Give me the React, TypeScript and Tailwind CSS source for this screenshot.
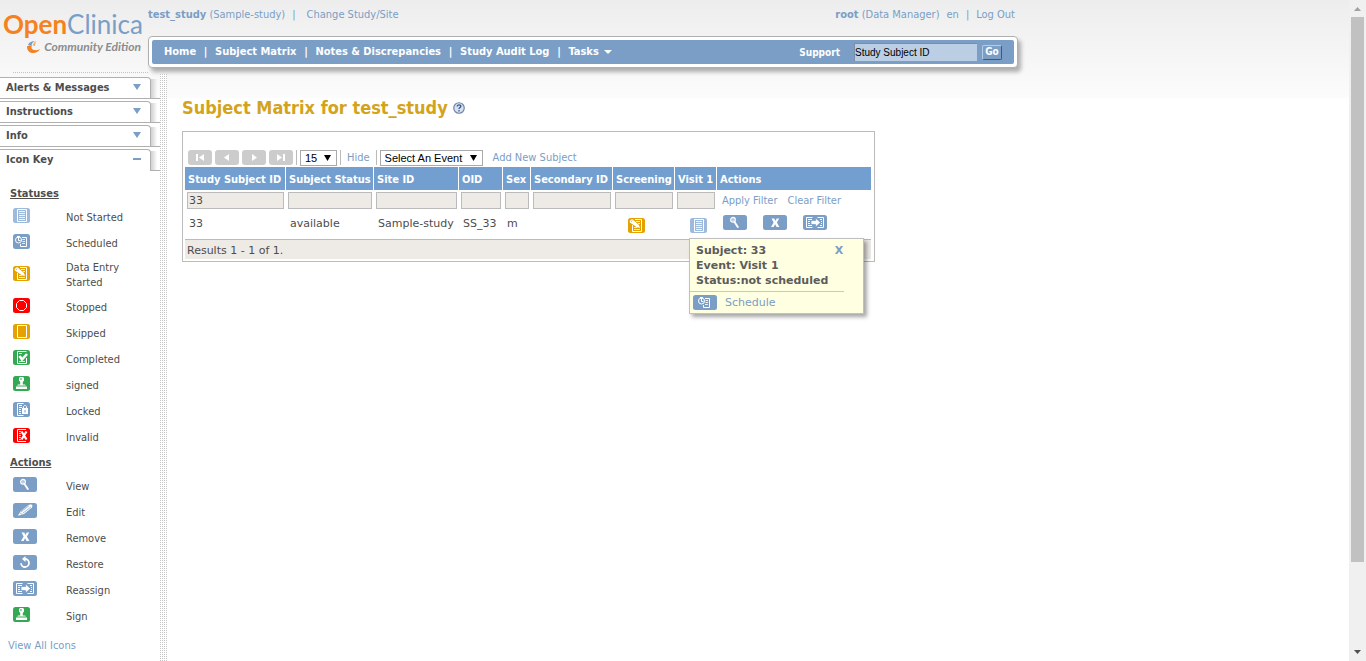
import React from "react";

const BLUE = "#7a9ec6";

type IconName =
  | "notStarted" | "scheduled" | "started" | "stopped" | "skipped" | "completed" | "signed"
  | "locked" | "invalid" | "view" | "edit" | "remove" | "restore" | "reassign" | "schedule";

const wide: IconName[] = ["view", "edit", "remove", "restore", "reassign", "schedule"];

const fills: Record<IconName, string> = {
  notStarted: "#9db9dc", scheduled: BLUE, started: "#e5a100", stopped: "#ff0000", skipped: "#e5a100",
  completed: "#34a853", signed: "#34a853", locked: BLUE, invalid: "#ff0000", view: BLUE, edit: BLUE,
  remove: BLUE, restore: BLUE, reassign: BLUE, schedule: BLUE,
};

const clock = (
  <g stroke="#fff" fill="none">
    <path d="M9 3.500h4.500v9h-6v-2.500" />
    <path d="M9.500 5.500h2.500M9.500 7.500h2.500M9 9.500h3" opacity=".85" />
    <circle cx="5.500" cy="6" r="3" fill={BLUE} />
    <path d="M5.500 6.500V2.500M5.500 6.500h2M4 2.500h3" />
  </g>
);

const glyphs: Record<IconName, React.ReactNode> = {
  notStarted: (
    <g stroke="#fff" fill="none">
      <path d="M4.500 1.500h9v12h-9z" />
      <path d="M6 3.500h6M6 5.500h6M6 7.500h6M6 9.500h6M6 11.500h6" opacity=".85" />
    </g>
  ),
  scheduled: clock,
  started: (
    <g stroke="#fff" fill="none">
      <path d="M4.500 7v6.500h9v-12H7" />
      <path d="M8 3.500h4M10 5.500h2M6 9.500h3M6 11.500h6" opacity=".85" />
      <path d="M1.500 3.500l1.500-2 1.500-.2 6.500 5.700 1 3-3.200-.7-6.800-4.800z" fill="#fff" stroke="none" />
      <path d="M4.200 2.500l-1 1.500" stroke="#e5a100" strokeWidth=".7" />
    </g>
  ),
  stopped: <path d="M6.500 2.500h4l3 3v4l-3 3h-4l-3-3v-4z" stroke="#fff" fill="none" />,
  skipped: <path d="M4.500 1.500h9v12h-9z" stroke="#fff" fill="none" />,
  completed: (
    <g stroke="#fff" fill="none">
      <path d="M13.500 8v5.500h-9v-12h9" />
      <path d="M6 3.500h3M6 11.500h6" opacity=".8" />
      <path d="M6.500 6l2.500 3.500 5-5.500" strokeWidth="2.600" />
    </g>
  ),
  signed: (
    <g fill="#fff">
      <path d="M6 2l1-1h3l1 1v2.500L9.800 6v2.500H12l1 1H4l1-1h2.200V6L6 4.500z" />
      <path d="M3 10.500h11v2.500H3z" />
      <path d="M7.500 2h1v2h-1z" fill="#34a853" />
    </g>
  ),
  locked: (
    <g stroke="#fff" fill="none">
      <path d="M10.500 13.500h-6v-12h6" />
      <path d="M6 3.500h3M6 5.500h3M6 7.500h2M6 9.500h2M6 11.500h2" />
      <path d="M9 6h6v6H9z" fill="#fff" stroke="none" />
      <path d="M10.500 6.500v-2l1-1h1l1 1v2" />
      <path d="M11.500 8h1v2.500h-1z" fill={BLUE} stroke="none" />
    </g>
  ),
  invalid: (
    <g stroke="#fff" fill="none">
      <path d="M13 1.500H4.500v12H13" />
      <path d="M6 3.500h2M6 5.500h2M6 7.500h2M6 9.500h2M6 11.500h2" opacity=".8" />
      <path d="M8.500 3.500l5 8M13.500 3.500l-5 8" strokeWidth="2.200" />
    </g>
  ),
  view: (
    <g stroke="#fff" fill="none">
      <circle cx="10" cy="4.800" r="2.300" strokeWidth="1.300" />
      <path d="M9 4.200h2M9 5.600h2" strokeWidth=".6" />
      <path d="M11.500 7l3.300 5" strokeWidth="1.900" strokeLinecap="round" />
    </g>
  ),
  edit: (
    <g>
      <path d="M4.800 12.800l2.700-4.300L15.500 2l2.500-.8 1.500 1.300-.5 2L11 11z" fill="#fff" />
      <path d="M8 9L16 2.700M9.800 10.200L18 4M7 10l2.200 1.300" stroke={BLUE} strokeWidth=".7" fill="none" />
    </g>
  ),
  remove: <path d="M8.500 3.500h2.800l1.200 2.400 1.200-2.400h2.500l-2.300 4 2.500 4.500h-2.800l-1.500-2.800-1.500 2.800H8l2.600-4.500z" fill="#fff" />,
  restore: (
    <g fill="none" stroke="#fff">
      <path d="M12 4a4 4 0 1 1-4 4.300" strokeWidth="1.800" />
      <path d="M12.500 1v6L9 4z" fill="#fff" stroke="none" />
    </g>
  ),
  reassign: (
    <g stroke="#fff" fill="none">
      <path d="M9.500 2.500h-6v10h6M14.500 2.500h6v10h-6" />
      <path d="M5 4.500h4M5 6.500h2M5 8.500h2M5 10.500h4M17 4.500h2M18 6.500h1M18 8.500h1M17 10.500h2" />
      <path d="M8 5.500h4.500V3l5 4.500-5 4.500V9.500H8z" fill="#fff" stroke={BLUE} strokeWidth=".8" />
    </g>
  ),
  schedule: <g transform="translate(3 0)">{clock}</g>,
};

function Icon({ name, label }: { name: IconName; label?: string }) {
  const w = wide.includes(name) ? 24 : 17;
  return (
    <svg width={w} height={15} viewBox={`0 0 ${w} 15`} className="block shrink-0" role={label ? "img" : undefined} aria-label={label} aria-hidden={!label}>
      <rect width={w} height={15} rx="2.500" fill={fills[name]} />
      {glyphs[name]}
    </svg>
  );
}

const statuses: [IconName, string][] = [
  ["notStarted", "Not Started"], ["scheduled", "Scheduled"], ["started", "Data Entry Started"],
  ["stopped", "Stopped"], ["skipped", "Skipped"], ["completed", "Completed"],
  ["signed", "signed"], ["locked", "Locked"], ["invalid", "Invalid"],
];
const actions: [IconName, string][] = [
  ["view", "View"], ["edit", "Edit"], ["remove", "Remove"],
  ["restore", "Restore"], ["reassign", "Reassign"], ["signed", "Sign"],
];

function KeyList({ title, items }: { title: string; items: [IconName, string][] }) {
  return (
    <section>
      <h3 className="pl-[10px] pt-[2px] text-[11px] font-bold leading-[21px] underline">{title}</h3>
      <ul>
        {items.map(([icon, text]) => (
          <li key={text} className="flex min-h-[26px] items-center py-1 pl-[13px]">
            <span className="mb-[3px] w-[53px]"><Icon name={icon} /></span>
            <span className="w-[70px] leading-[15px]">{text}</span>
          </li>
        ))}
      </ul>
    </section>
  );
}

function SideTab({ title, open }: { title: string; open?: boolean }) {
  return (
    <div className="mb-[2px] flex h-[22px]">
      <button
        className={
          "flex w-[151px] items-center justify-between rounded-tr border-r border-t border-[#b0b0b0] bg-white pl-[6px] pr-[9px] text-left font-bold " +
          (open ? "pb-px" : "border-b")
        }
      >
        {title}
        {open ? (
          <svg width="8" height="6" className="mb-[2px]" aria-hidden="true"><path d="M0 2h8v2H0z" fill={BLUE} /></svg>
        ) : (
          <svg width="8" height="6" className="mb-[2px]" aria-hidden="true"><path d="M0 0h8L4 6z" fill={BLUE} /></svg>
        )}
      </button>
      <span className="mt-[2px] w-[9px] border-b border-[#b0b0b0] bg-linear-to-r from-[#d0d0d0] to-transparent to-70%" />
    </div>
  );
}

const pagers = [
  ["First page", "M8 4h2v7H8zM16 4v7l-5-3.500z"],
  ["Previous page", "M14 4v7L9 7.500z"],
  ["Next page", "M10 4v7l5-3.500z"],
  ["Last page", "M8 4v7l5-3.500zM14 4h2v7h-2z"],
];

const columns: [string, string][] = [
  ["Study Subject ID", "w-[101px]"], ["Subject Status", "w-[88px]"], ["Site ID", "w-[85px]"],
  ["OID", "w-[44px]"], ["Sex", "w-[28px]"], ["Secondary ID", "w-[82px]"],
  ["Screening", "w-[62px]"], ["Visit 1", "w-[42px]"],
];

const navItems = ["Home", "Subject Matrix", "Notes & Discrepancies", "Study Audit Log"];

function Header() {
  return (
    <header className="flex h-[74px]">
      <div className="flex w-[148px] shrink-0 flex-col">
        <a href="#" className="block h-[72px] pl-[3px] pt-[9px]" aria-label="OpenClinica Community Edition">
          <span className="block whitespace-nowrap font-['Lato',sans-serif] text-[26px] leading-[30px] text-[#7a9ec6]">
            <b className="font-bold text-[#f58220]">Open</b>Clinica
          </span>
          <span className="flex items-center justify-end gap-[3px] pr-[7px]">
            <svg width="15" height="14" viewBox="0 0 15 14" aria-hidden="true">
              <path d="M1 6.500C1 14.500 11 15 14 9c-3 2-7.500 1.500-8.500-1-.4-1 .5-2 1-2.500C3.500 5.500 1 5.500 1 6.500z" fill="#f58220" />
              <path d="M2 5c1-3 4-4 7-4-2 1-3 2-3.500 4.500C4 6 3 5 2 5z" fill={BLUE} />
              <path d="M7 5.500c0-2 1.500-4 3.500-4.500-1 1-1.500 3-1.500 5z" fill="#f5a96b" />
            </svg>
            <span className="whitespace-nowrap font-['Lato',sans-serif] text-[12px] font-bold italic leading-[16px] text-[#8c8c8c]">Community Edition</span>
          </span>
        </a>
        <div className="ml-[13px] h-px bg-[repeating-linear-gradient(90deg,#c4c4c4_0_1px,transparent_1px_2px)]" />
      </div>
      <div className="w-[870px] text-[#7a9ec6]">
        <div className="flex h-[36px] justify-between pr-[3px] pt-[7px] leading-[15px]">
          <div className="flex gap-[7px]">
            <span><a href="#" className="font-bold">test_study</a> (Sample-study)</span>
            <span>|</span>
            <a href="#" className="pl-[4px]">Change Study/Site</a>
          </div>
          <div className="flex gap-[7px]">
            <span><b>root</b> (Data Manager)</span>
            <span>en</span>
            <span>|</span>
            <a href="#">Log Out</a>
          </div>
        </div>
        <div className="rounded-[4px] border border-[#b0b0b0] bg-white p-[3px] shadow-[3px_4px_4px_rgba(0,0,0,0.3)]">
          <nav className="flex h-[24px] items-center rounded-[2px] bg-[#7a9ec6] pl-[12px] pr-[12px] font-bold text-white">
            {navItems.map((item) => (
              <React.Fragment key={item}>
                <a href="#">{item}</a>
                <span className="w-[19px] text-center">|</span>
              </React.Fragment>
            ))}
            <a href="#" className="flex items-center gap-[5px]">
              Tasks
              <svg width="8" height="4" aria-hidden="true"><path d="M0 0h8L4 4z" fill="#fff" /></svg>
            </a>
            <a href="#" className="ml-auto text-[10px]">Support</a>
            <input
              aria-label="Study Subject ID"
              defaultValue="Study Subject ID"
              className="ml-[14px] h-[18px] w-[123px] border-l border-t border-[#7d8ea3] bg-[#bccee3] font-['Liberation_Sans',sans-serif] text-[10px] font-normal text-black"
            />
            <button className="ml-[5px] h-[15px] w-[20px] rounded-[2px] border border-b-[#3b5a80] border-l-[#b5cce6] border-r-[#3b5a80] border-t-[#b5cce6] text-[10px] font-bold leading-[12px]">Go</button>
          </nav>
        </div>
      </div>
    </header>
  );
}

function Popup() {
  return (
    <div className="absolute left-[506px] top-[106px] z-10 w-[175px] border border-[#c0c0c0] bg-[#ffffe1] font-['DejaVu_Sans',sans-serif] shadow-[3px_3px_4px_rgba(0,0,0,0.35)]">
      <div className="mr-[19px] flex justify-between border-b border-[#c6c6d4] pb-[3px] pl-[6px] pt-[4px] font-bold leading-[15px] text-[#5c5c5c]">
        <p className="whitespace-nowrap">Subject: 33<br />Event: Visit 1<br />Status:not scheduled</p>
        <button aria-label="Close" className="h-[15px] w-[10px] font-bold text-[#7a9ec6]">X</button>
      </div>
      <a href="#" className="flex items-center gap-[8px] py-[3px] pl-[3px] leading-[15px] text-[#7a9ec6]">
        <Icon name="schedule" />
        Schedule
      </a>
    </div>
  );
}

function Picker({ label, text, width }: { label: string; text: string; width: string }) {
  return (
    <span className={"mb-px grid h-[16px] items-center border border-[#aaa] bg-white text-black " + width}>
      <select aria-label={label} className="col-start-1 row-start-1 h-[14px] w-full appearance-none bg-transparent pl-[4px] font-['Liberation_Sans',sans-serif] text-[11px] leading-[14px]">
        <option>{text}</option>
      </select>
      <svg width="7" height="6" className="pointer-events-none col-start-1 row-start-1 mr-[5px] justify-self-end" aria-hidden="true">
        <path d="M0 0h7L3.500 6z" />
      </svg>
    </span>
  );
}

function Matrix() {
  const field = "block h-[17px] w-full border border-[#bbb] bg-[#eeebe7] px-[1px] font-['DejaVu_Sans',sans-serif] text-[11px]";
  const cell = "pb-[2px] pt-0 pl-[4px] text-left";
  const divider = "mb-[2px] h-[15px] w-px bg-[#bbb]";
  return (
    <div className="relative w-[693px] border border-[#bbb] pb-[2px] pl-[2px] pr-[3px]">
      <div className="flex h-[35px] items-end gap-[3px] pl-[3px] text-[#7a9ec6]">
        {pagers.map(([label, d]) => (
          <button key={label} aria-label={label} className="mb-[2px]">
            <svg width="24" height="15" className="block" aria-hidden="true">
              <rect width="24" height="15" rx="3" fill="#ccc" />
              <path d={d} fill="#fff" />
            </svg>
          </button>
        ))}
        <span className={divider} />
        <Picker label="Rows per page" text="15" width="w-[37px]" />
        <span className={divider} />
        <a href="#" className="mx-[3px] leading-[18px]">Hide</a>
        <span className={divider} />
        <Picker label="Select an event" text="Select An Event" width="w-[103px]" />
        <a href="#" className="ml-[7px] leading-[18px]">Add New Subject</a>
      </div>
      <table className="w-full table-fixed border-separate border-spacing-0 font-['DejaVu_Sans',sans-serif]">
        <thead>
          <tr className="h-[23px] bg-[#729fcf] font-['DejaVu_Sans_Condensed','DejaVu_Sans',sans-serif] text-white">
            {columns.map(([name, w]) => (
              <th key={name} className={w + " whitespace-nowrap border-r border-white p-0 pl-[3px] pt-[3px] text-left"}>{name}</th>
            ))}
            <th className="p-0 pl-[3px] pt-[3px] text-left">Actions</th>
          </tr>
        </thead>
        <tbody>
          <tr className="h-[21px]">
            {columns.map(([name], i) => (
              <td key={name} className="px-[2px] py-0">
                <input aria-label={"Filter by " + name} defaultValue={i === 0 ? "33" : ""} className={field} />
              </td>
            ))}
            <td className="p-0 pl-[5px] pt-[2px] font-['DejaVu_Sans_Condensed','DejaVu_Sans',sans-serif] text-[#7a9ec6]">
              <div className="flex gap-[10px] whitespace-nowrap"><a href="#">Apply Filter</a><a href="#">Clear Filter</a></div>
            </td>
          </tr>
          <tr className="h-[28px]">
            <td className={cell}>33</td>
            <td className={cell}>available</td>
            <td className={cell + " whitespace-nowrap"}>Sample-study</td>
            <td className={cell + " whitespace-nowrap"}>SS_33</td>
            <td className={cell}>m</td>
            <td className={cell} />
            <td className="p-0 pl-[15px]"><a href="#" className="block"><Icon name="started" label="Data Entry Started" /></a></td>
            <td className="p-0 pl-[15px]"><a href="#" className="block"><Icon name="notStarted" label="Not Started" /></a></td>
            <td className="p-0 pb-[6px] pl-[6px]">
              <div className="flex gap-[16px]">
                <a href="#"><Icon name="view" label="View" /></a>
                <a href="#"><Icon name="remove" label="Remove" /></a>
                <a href="#"><Icon name="reassign" label="Reassign" /></a>
              </div>
            </td>
          </tr>
        </tbody>
        <tfoot>
          <tr>
            <td colSpan={9} className="border-t border-[#bbb] bg-[#eeebe7] p-0 pl-[2px] pt-[3px] leading-[16px]">Results 1 - 1 of 1.</td>
          </tr>
        </tfoot>
      </table>
      <Popup />
    </div>
  );
}

export default function App() {
  return (
    <div className="flex h-screen overflow-hidden bg-white font-['DejaVu_Sans_Condensed','DejaVu_Sans',sans-serif] text-[11px] text-[#4d4d4d]">
      <div className="flex min-w-0 flex-1 flex-col overflow-hidden bg-[linear-gradient(#ededed,#fcfcfc_98px,#fff_98px)]">
        <Header />
        <div className="flex min-h-0 flex-1">
          <aside className="w-[160px] shrink-0 pt-[3px]">
            <SideTab title="Alerts & Messages" />
            <SideTab title="Instructions" />
            <SideTab title="Info" />
            <SideTab title="Icon Key" open />
            <div className="pt-[8px]">
              <KeyList title="Statuses" items={statuses} />
              <KeyList title="Actions" items={actions} />
              <a href="#" className="mt-[9px] block pl-[8px] leading-[15px] text-[#7a9ec6]">View All Icons</a>
            </div>
          </aside>
          <div className="w-[7px] shrink-0 bg-[linear-gradient(transparent_1px,#fff_1px),linear-gradient(90deg,#c4c4c4_1px,#fff_1px)] bg-[length:2px_2px]" />
          <main className="min-w-0 flex-1 pl-[15px] pt-[22px]">
            <h1 className="mb-[11px] flex items-center gap-[5px] text-[18px] font-bold leading-[24px] text-[#d4a31c]">
              Subject Matrix for test_study
              <svg width="12" height="12" viewBox="0 0 13 13" role="img" aria-label="Help">
                <circle cx="6.500" cy="6.500" r="5.700" fill="#d9e2ee" stroke="#6d84a8" strokeWidth="1.300" />
                <path d="M4.500 5c0-2.500 4-2.500 4-.3 0 1.400-2 1.300-2 3" fill="none" stroke="#2f5591" strokeWidth="1.400" />
                <circle cx="6.500" cy="9.600" r=".9" fill="#2f5591" />
              </svg>
            </h1>
            <Matrix />
          </main>
        </div>
      </div>
      <div className="flex w-[17px] shrink-0 flex-col items-center bg-[#f0f0f0]" aria-hidden="true">
        <svg width="17" height="17" className="shrink-0"><path d="M5 11h7L8.500 7z" fill="#a0a0a0" /></svg>
        <div className="flex-1 self-stretch px-[2px]"><div className="h-[87%] bg-[#c1c1c1]" /></div>
        <svg width="17" height="17" className="shrink-0"><path d="M5 6h7l-3.500 4z" fill="#505050" /></svg>
      </div>
    </div>
  );
}
